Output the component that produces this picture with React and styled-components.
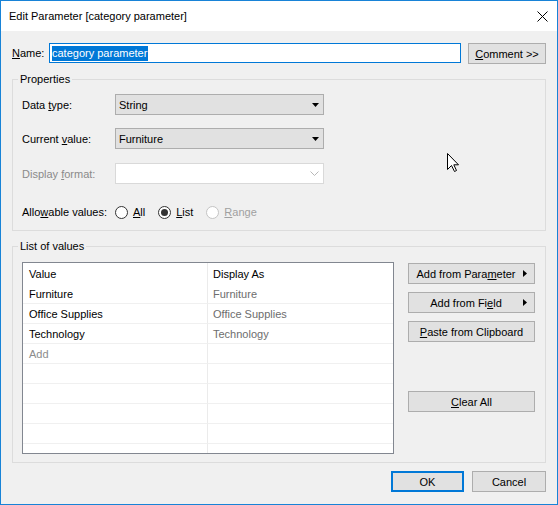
import React from 'react';
import styled, { createGlobalStyle } from 'styled-components';

const GlobalStyle = createGlobalStyle`
  html, body {
    margin: 0;
    padding: 0;
    background: #f0f0f0;
  }
  body {
    font-family: "Liberation Sans", Arial, sans-serif;
    font-size: 11px;
    color: #000;
  }
`;

const Window = styled.div`
  position: relative;
  width: 558px;
  height: 505px;
  box-sizing: border-box;
  border: 1px solid #1883d7;
  background: #f0f0f0;
  display: flex;
  flex-direction: column;
  overflow: hidden;
`;

const TitleBar = styled.div`
  height: 30px;
  background: #fff;
  display: flex;
  align-items: center;
  justify-content: space-between;
  padding: 0 9px 0 8px;
  flex-shrink: 0;
  font-size: 11px;
`;

const Content = styled.div`
  flex: 1;
  padding: 12px 11px 0 11px;
  display: flex;
  flex-direction: column;
`;

const NameRow = styled.div`
  display: flex;
  align-items: flex-start;
  height: 21px;
`;

const NameLabel = styled.div`
  width: 37px;
  line-height: 20px;
`;

const TextBox = styled.div`
  flex: 1;
  height: 20px;
  box-sizing: border-box;
  border: 1px solid #0078d7;
  background: #fff;
  display: flex;
  align-items: center;
  padding-left: 2px;
  margin-right: 7px;
`;

const Selected = styled.span`
  background: #0078d7;
  color: #fff;
  line-height: 15px;
  padding-right: 1px;
`;

const Key = styled.span`
  text-decoration: underline;
`;

const Button = styled.button`
  font-family: inherit;
  font-size: 11px;
  color: #000;
  height: 21px;
  width: ${p => p.$width || 'auto'};
  box-sizing: border-box;
  padding: 0;
  margin: 0;
  background: #e1e1e1;
  border: ${p => (p.$primary ? '2px solid #0078d7' : '1px solid #adadad')};
  display: flex;
  align-items: center;
  justify-content: center;
  flex-shrink: 0;
  white-space: nowrap;
`;

const Group = styled.fieldset`
  margin: ${p => p.$top}px 0 0 0;
  padding: ${p => p.$padTop}px 9px 8px 9px;
  border: 1px solid #dcdcdc;
  min-width: 0;
`;

const Legend = styled.legend`
  padding: 0 2px;
  margin-left: -4px;
  line-height: 14px;
`;

const PropRow = styled.div`
  display: flex;
  align-items: center;
  height: ${p => p.$h || 21}px;
  margin-top: ${p => p.$mt || 0}px;
  color: ${p => (p.$disabled ? '#8a8a8a' : '#000')};
`;

const PropLabel = styled.div`
  width: 93px;
  white-space: nowrap;
`;

const Combo = styled.div`
  width: 209px;
  height: 21px;
  box-sizing: border-box;
  border: 1px solid ${p => (p.$disabled ? '#d9d9d9' : '#adadad')};
  background: ${p => (p.$disabled ? '#fff' : '#e1e1e1')};
  display: flex;
  align-items: center;
  justify-content: space-between;
  padding: 0 4px 0 3px;
  color: #000;
`;

const RadioGroup = styled.div`
  display: flex;
  align-items: center;
  gap: 13px;
`;

const RadioItem = styled.div`
  display: flex;
  align-items: center;
  gap: 5px;
  color: ${p => (p.$disabled ? '#a0a0a0' : '#000')};
`;

const RadioCircle = styled.div`
  width: 13px;
  height: 13px;
  box-sizing: border-box;
  border-radius: 50%;
  border: 1px solid ${p => (p.$disabled ? '#c4c4c4' : '#333')};
  background: #fff;
  display: flex;
  align-items: center;
  justify-content: center;
  &::after {
    content: '';
    display: ${p => (p.$checked ? 'block' : 'none')};
    width: 7px;
    height: 7px;
    border-radius: 50%;
    background: #333;
  }
`;

const ListArea = styled.div`
  display: flex;
  gap: 14px;
`;

const Table = styled.div`
  width: 372px;
  height: 192px;
  box-sizing: border-box;
  border: 1px solid #828790;
  background: #fff;
  overflow: hidden;
  display: grid;
  grid-template-columns: 185px 1fr;
  grid-auto-rows: 20px;
  grid-template-rows: 21px;
`;

const Cell = styled.div`
  box-sizing: border-box;
  border-right: ${p => (p.$first ? '1px solid #ebebeb' : 'none')};
  border-bottom: ${p => (p.$head ? 'none' : '1px solid #f0f0f0')};
  padding-left: ${p => (p.$first ? 6 : 5)}px;
  display: flex;
  align-items: center;
  color: ${p => p.$color || '#000'};
  white-space: nowrap;
`;

const SideButtons = styled.div`
  width: 127px;
  padding-top: 1px;
  display: flex;
  flex-direction: column;
  gap: 8px;
`;

const Spacer = styled.div`
  height: 33px;
`;

const MenuButtonLabel = styled.span`
  flex: 1;
  text-align: center;
`;

const Arrow = styled.svg`
  width: 4px;
  height: 7px;
  margin-right: 7px;
  flex-shrink: 0;
`;

const Footer = styled.div`
  margin-top: 8px;
  display: flex;
  justify-content: flex-end;
  gap: 8px;
`;

const Cursor = styled.svg`
  position: absolute;
  left: 445px;
  top: 151px;
  width: 14px;
  height: 21px;
`;

const rows = [
  ['Furniture', 'Furniture'],
  ['Office Supplies', 'Office Supplies'],
  ['Technology', 'Technology'],
  ['Add', ''],
  ['', ''],
  ['', ''],
  ['', ''],
  ['', ''],
  ['', ''],
];

function DropArrow({ disabled }) {
  if (disabled) {
    return (
      <svg width="9" height="5" viewBox="0 0 9 5">
        <path d="M0.5 0.5 L4.5 4.5 L8.5 0.5" fill="none" stroke="#b8b8b8" strokeWidth="1" />
      </svg>
    );
  }
  return (
    <svg width="7" height="4" viewBox="0 0 7 4">
      <path d="M0 0 H7 L3.5 4 Z" fill="#000" />
    </svg>
  );
}

function Radio({ checked, disabled, children }) {
  return (
    <RadioItem $disabled={disabled}>
      <RadioCircle $checked={checked} $disabled={disabled} />
      <span>{children}</span>
    </RadioItem>
  );
}

function MenuButton({ children }) {
  return (
    <Button $width="127px">
      <MenuButtonLabel>{children}</MenuButtonLabel>
      <Arrow viewBox="0 0 4 7">
        <path d="M0 0 L4 3.5 L0 7 Z" fill="#000" />
      </Arrow>
    </Button>
  );
}

export default function App() {
  return (
    <>
      <GlobalStyle />
      <Window>
        <TitleBar>
          <span>Edit Parameter [category parameter]</span>
          <svg width="11" height="11" viewBox="0 0 11 11">
            <path d="M0.5 0.5 L10.5 10.5 M10.5 0.5 L0.5 10.5" stroke="#000" strokeWidth="1" />
          </svg>
        </TitleBar>

        <Content>
          <NameRow>
            <NameLabel><Key>N</Key>ame:</NameLabel>
            <TextBox><Selected>category parameter</Selected></TextBox>
            <Button $width="78px"><Key>C</Key>omment &gt;&gt;</Button>
          </NameRow>

          <Group $top={8} $padTop={8}>
            <Legend>Properties</Legend>
            <PropRow>
              <PropLabel>Data <Key>t</Key>ype:</PropLabel>
              <Combo>String<DropArrow /></Combo>
            </PropRow>
            <PropRow $mt={13}>
              <PropLabel>Current <Key>v</Key>alue:</PropLabel>
              <Combo>Furniture<DropArrow /></Combo>
            </PropRow>
            <PropRow $mt={14} $disabled>
              <PropLabel>Display <Key>f</Key>ormat:</PropLabel>
              <Combo $disabled><span /><DropArrow disabled /></Combo>
            </PropRow>
            <PropRow $mt={18} $h={20}>
              <PropLabel>Allo<Key>w</Key>able values:</PropLabel>
              <RadioGroup>
                <Radio><Key>A</Key>ll</Radio>
                <Radio checked><Key>L</Key>ist</Radio>
                <Radio disabled><Key>R</Key>ange</Radio>
              </RadioGroup>
            </PropRow>
          </Group>

          <Group $top={8} $padTop={9}>
            <Legend>List of values</Legend>
            <ListArea>
              <Table>
                <Cell $first $head>Value</Cell>
                <Cell $head>Display As</Cell>
                {rows.map(([value, display], i) => (
                  <React.Fragment key={i}>
                    <Cell $first $color={value === 'Add' ? '#8c8c8c' : '#000'}>{value}</Cell>
                    <Cell $color="#6d6d6d">{display}</Cell>
                  </React.Fragment>
                ))}
              </Table>
              <SideButtons>
                <MenuButton>Add from Para<Key>m</Key>eter</MenuButton>
                <MenuButton>Add from Fi<Key>e</Key>ld</MenuButton>
                <Button $width="127px"><Key>P</Key>aste from Clipboard</Button>
                <Spacer />
                <Button $width="127px"><Key>C</Key>lear All</Button>
              </SideButtons>
            </ListArea>
          </Group>

          <Footer>
            <Button $width="73px" $primary>OK</Button>
            <Button $width="74px">Cancel</Button>
          </Footer>
        </Content>

        <Cursor viewBox="0 0 14 21">
          <path
            d="M1.5 1.5 L1.5 17.5 L5.5 13.5 L8.5 19.5 L10.5 18.5 L7.8 12.8 L12.5 12.8 Z"
            fill="#fff"
            stroke="#000"
            strokeWidth="1"
            strokeLinejoin="miter"
          />
        </Cursor>
      </Window>
    </>
  );
}
